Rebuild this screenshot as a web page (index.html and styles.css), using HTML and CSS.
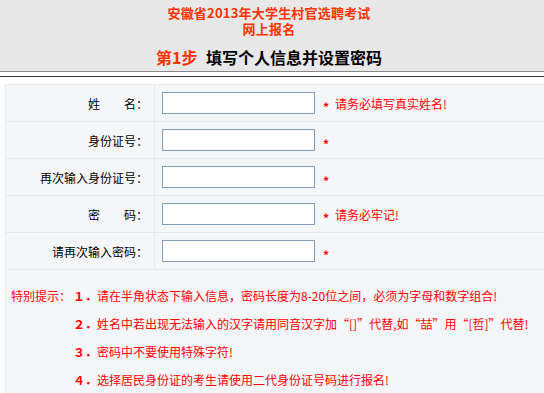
FILE: index.html
```html
<!DOCTYPE html>
<html lang="zh-CN">
<head>
    <meta charset="UTF-8">
    <title>网上报名</title>
    <link rel="stylesheet" href="styles.css">
</head>
<body>
    <div class="header">
        <div class="title">安徽省2013年大学生村官选聘考试</div>
        <div class="title">网上报名</div>
        <div class="step"><span class="step-num">第1步</span> 填写个人信息并设置密码</div>
    </div>
    <div class="divider"></div>

    <div class="form">
        <div class="row">
            <div class="label">姓　　名：</div>
            <div class="field">
                <input type="text" class="text-input">
                <span class="star">*</span>
                <span class="hint">请务必填写真实姓名!</span>
            </div>
        </div>
        <div class="row">
            <div class="label">身份证号：</div>
            <div class="field">
                <input type="text" class="text-input">
                <span class="star">*</span>
            </div>
        </div>
        <div class="row">
            <div class="label">再次输入身份证号：</div>
            <div class="field">
                <input type="text" class="text-input">
                <span class="star">*</span>
            </div>
        </div>
        <div class="row">
            <div class="label">密　　码：</div>
            <div class="field">
                <input type="password" class="text-input">
                <span class="star">*</span>
                <span class="hint">请务必牢记!</span>
            </div>
        </div>
        <div class="row">
            <div class="label">请再次输入密码：</div>
            <div class="field">
                <input type="password" class="text-input">
                <span class="star">*</span>
            </div>
        </div>

        <div class="tips">
            <div class="tips-title">特别提示：</div>
            <div class="tips-list">
                <p><b>１．</b>请在半角状态下输入信息，密码长度为8-20位之间，必须为字母和数字组合!</p>
                <p><b>２．</b>姓名中若出现无法输入的汉字请用同音汉字加“[]”代替,如“喆”用“[哲]”代替!</p>
                <p><b>３．</b>密码中不要使用特殊字符!</p>
                <p><b>４．</b>选择居民身份证的考生请使用二代身份证号码进行报名!</p>
            </div>
        </div>
    </div>
</body>
</html>
```

FILE: styles.css
```css
html, body {
    margin: 0;
    padding: 0;
    background: #fff;
    overflow: hidden;
}
body {
    font-family: "Noto Sans CJK SC", "Liberation Sans", sans-serif;
    font-size: 12px;
    color: #000;
}
.header {
    background: #e8e8e8;
    border-bottom: 1px solid #888;
    padding: 5px 6px 4px 0;
    text-align: center;
}
.title {
    color: #ff3300;
    font-size: 13px;
    font-weight: bold;
    line-height: 16px;
    letter-spacing: 0.2px;
}
.step {
    margin-top: 10px;
    font-size: 16px;
    font-weight: bold;
    line-height: 20px;
}
.step-num {
    color: #ff3300;
    margin-right: 5px;
}
.divider {
    margin-top: 4px;
    border-top: 1px solid #333;
}
.form {
    margin: 7px 0 0 5px;
    width: 620px;
    border-left: 1px solid #e6e8eb;
    background: #f5f6f8;
}
.row {
    display: flex;
    height: 36px;
    border-top: 1px solid #e6e8eb;
}
.label {
    width: 142px;
    padding-right: 6px;
    border-right: 1px solid #e6e8eb;
    display: flex;
    align-items: center;
    justify-content: flex-end;
    white-space: nowrap;
}
.field {
    display: flex;
    align-items: center;
    padding-left: 7px;
}
.text-input {
    box-sizing: border-box;
    width: 153px;
    height: 22px;
    margin: 0;
    border: 1px solid #7f9db9;
    background: #fff;
}
.star {
    color: #ff0000;
    margin-left: 8px;
    position: relative;
    top: 3px;
    font-weight: bold;
}
.hint {
    color: #ff0000;
    margin-left: 6px;
}
.tips {
    display: flex;
    border-top: 1px solid #e6e8eb;
    padding: 12px 0 0 5px;
    color: #ff0000;
    line-height: 28px;
    white-space: nowrap;
    height: 140px;
}
.tips-title {
    width: 62px;
}
.tips-list p {
    margin: 0;
}
```
